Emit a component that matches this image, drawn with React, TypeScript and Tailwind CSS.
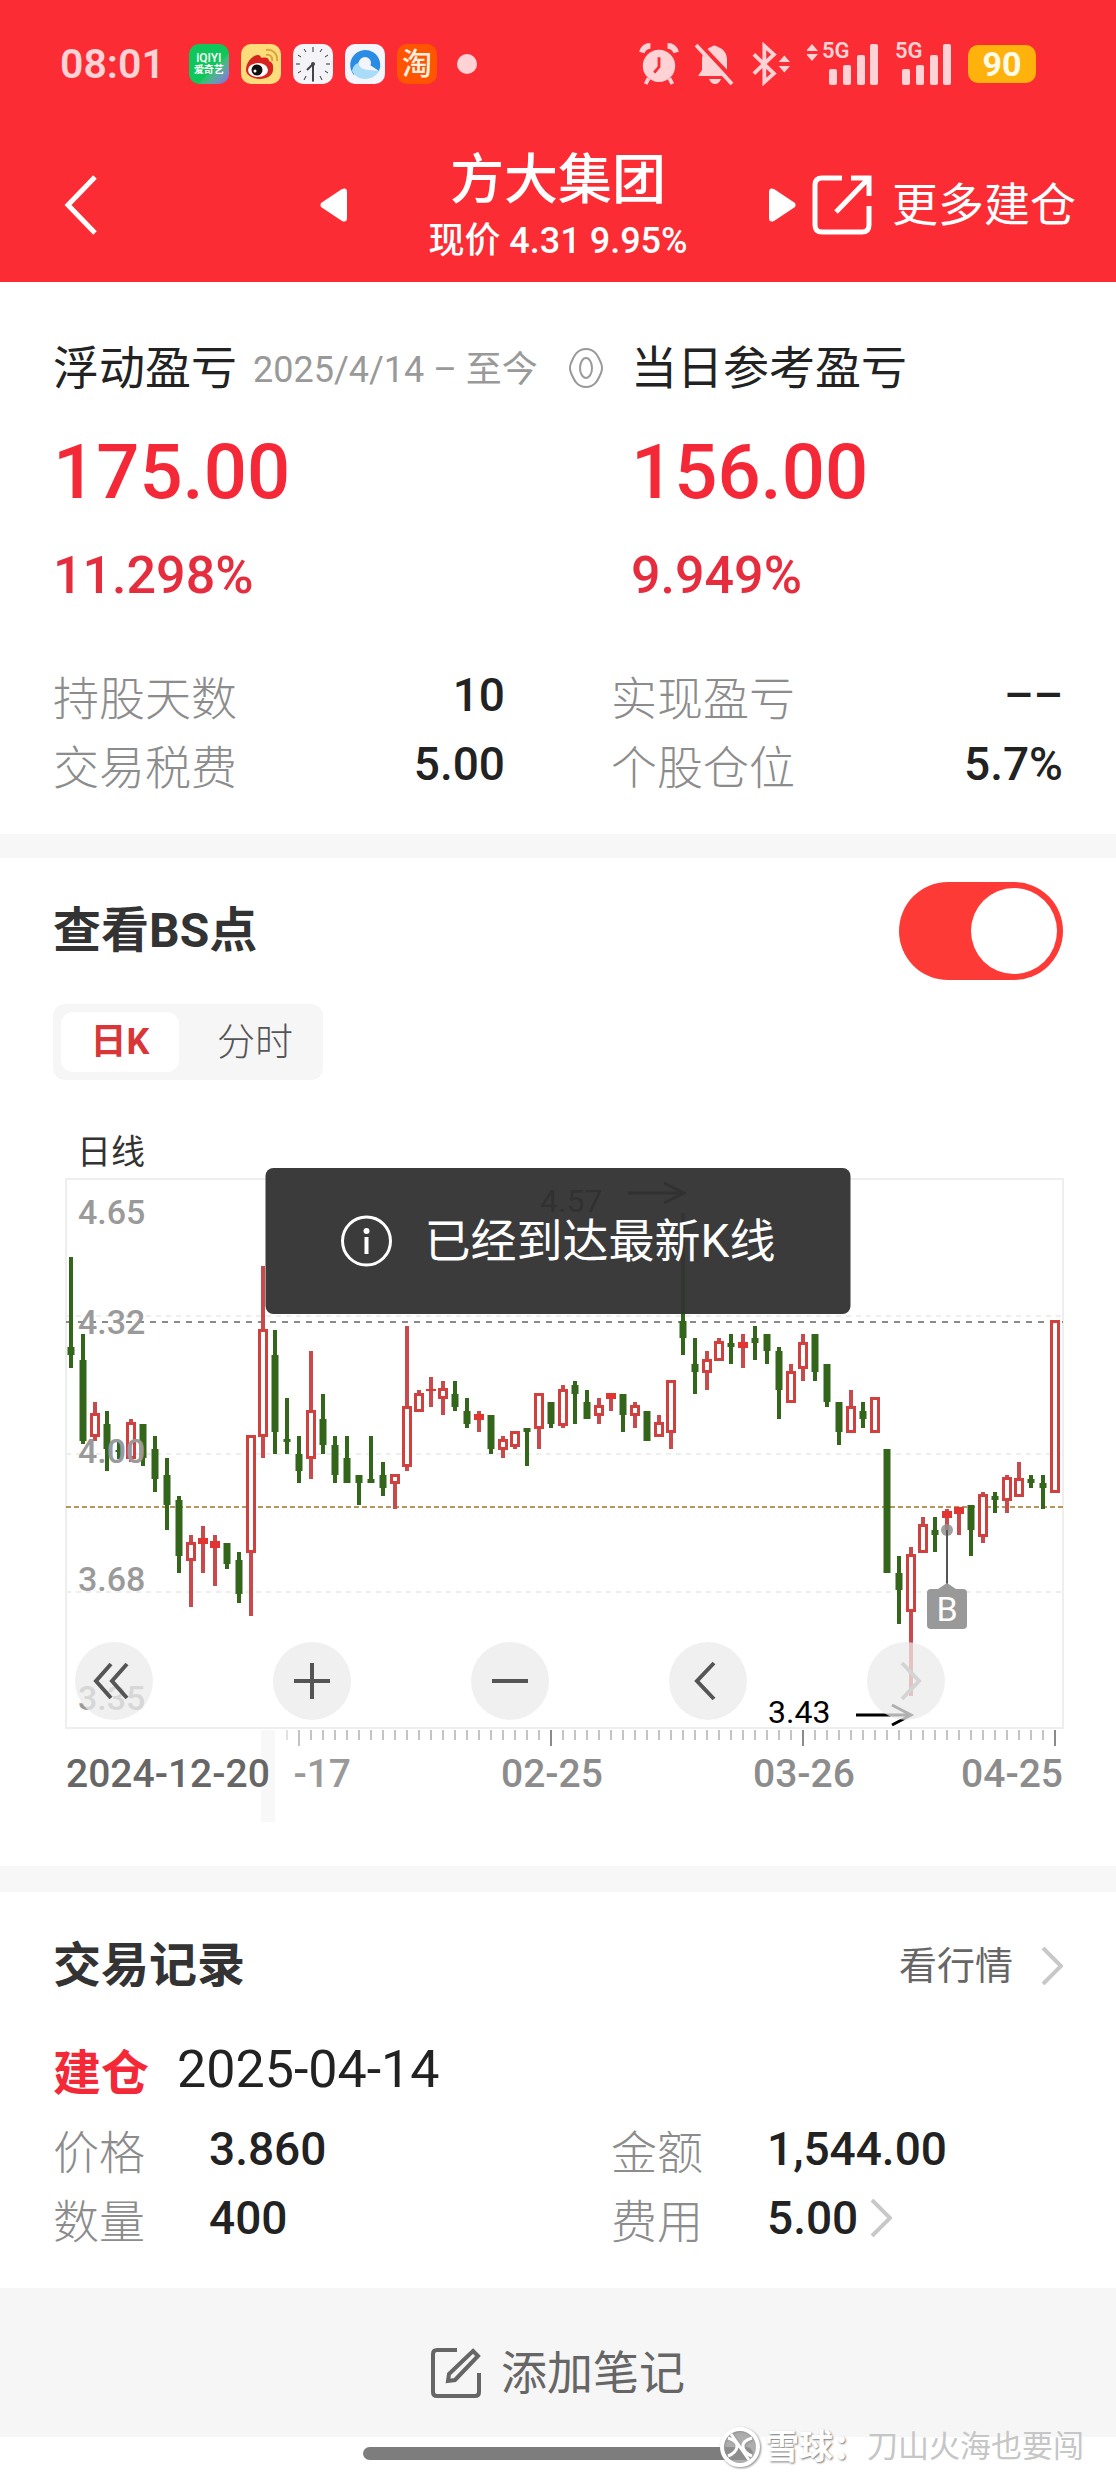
import { useState } from 'react'

type Candle = [kind: 'r' | 'g', high: number, top: number, bottom: number, low: number]

const candles: Candle[] = [
  ['g', 97, 187, 195, 208], ['g', 174, 200, 281, 284], ['r', 242, 253, 277, 281], ['g', 251, 264, 289, 311],
  ['g', 281, 290, 292, 299], ['r', 259, 262, 299, 302], ['g', 264, 264, 298, 306], ['g', 276, 289, 319, 332],
  ['g', 298, 315, 345, 370], ['g', 336, 340, 396, 413], ['r', 375, 382, 401, 447], ['r', 366, 378, 384, 413],
  ['r', 375, 381, 388, 426], ['g', 383, 383, 404, 409], ['g', 392, 400, 434, 443], ['r', 275, 275, 393, 456],
  ['r', 106, 169, 277, 298], ['g', 170, 195, 272, 294], ['g', 238, 279, 282, 294], ['g', 276, 294, 311, 323],
  ['r', 191, 250, 299, 319], ['g', 234, 259, 285, 294], ['g', 276, 285, 315, 323], ['g', 276, 298, 323, 323],
  ['g', 315, 315, 323, 345], ['g', 276, 319, 323, 323], ['g', 302, 315, 328, 336], ['r', 314, 314, 324, 349],
  ['r', 166, 246, 307, 311], ['r', 230, 233, 252, 252], ['r', 217, 229, 231, 247], ['r', 221, 228, 239, 255],
  ['g', 221, 234, 247, 251], ['g', 238, 251, 264, 268], ['r', 251, 254, 260, 272], ['g', 255, 255, 289, 294],
  ['r', 276, 279, 290, 298], ['r', 271, 271, 287, 289], ['g', 268, 268, 272, 306], ['r', 233, 233, 269, 289],
  ['g', 242, 242, 264, 268], ['r', 225, 229, 266, 268], ['g', 221, 225, 234, 264], ['g', 230, 242, 259, 259],
  ['r', 238, 245, 256, 264], ['r', 233, 233, 239, 251], ['g', 234, 234, 255, 272], ['r', 242, 245, 256, 268],
  ['g', 251, 251, 281, 281], ['r', 255, 262, 277, 277], ['r', 220, 220, 273, 289], ['g', 53, 161, 178, 195],
  ['g', 178, 204, 212, 234], ['r', 191, 199, 213, 230], ['r', 178, 181, 201, 201], ['g', 174, 183, 187, 204],
  ['r', 174, 182, 188, 208], ['g', 166, 178, 183, 200], ['g', 174, 174, 191, 204], ['g', 187, 191, 230, 259],
  ['r', 204, 211, 243, 243], ['r', 174, 182, 209, 221], ['g', 174, 174, 212, 221], ['g', 204, 204, 242, 247],
  ['g', 242, 242, 272, 285], ['r', 230, 246, 273, 273], ['g', 242, 251, 259, 268], ['r', 237, 237, 273, 273],
  ['g', 289, 289, 413, 413], ['g', 396, 413, 430, 464], ['r', 387, 394, 452, 536], ['r', 357, 364, 393, 393],
  ['g', 357, 370, 375, 392], ['r', 349, 351, 358, 370], ['r', 347, 347, 354, 375], ['g', 345, 345, 370, 396],
  ['r', 332, 334, 377, 383], ['g', 332, 336, 340, 353], ['r', 315, 317, 341, 353], ['r', 302, 318, 337, 337],
  ['g', 315, 319, 323, 328], ['g', 315, 323, 328, 349], ['r', 160, 160, 333, 333],
]

const candleX = (i: number) => 18 + i * 12

const priceLabels = [
  { text: '4.65', y: 64 },
  { text: '4.32', y: 174 },
  { text: '4.00', y: 303 },
  { text: '3.68', y: 431 },
  { text: '3.35', y: 550 },
]

function CandleBar({ candle, x }: { candle: Candle; x: number }) {
  const [kind, high, top, bottom, low] = candle
  if (kind === 'g') {
    return (
      <g fill="#33661a">
        <rect x={x - 2} y={high} width="4" height={low - high} />
        <rect x={x - 3.5} y={top} width="7" height={bottom - top} />
      </g>
    )
  }
  const hollow = bottom - top > 8
  return (
    <g fill="#c94a4c">
      <rect x={x - 2} y={high} width="4" height={low - high} />
      <rect x={x - 5} y={top} width="10" height={bottom - top} fill={hollow ? '#d0403f' : '#e03530'} />
      {hollow && <rect x={x - 2} y={top + 3} width="4" height={bottom - top - 6} fill="#fff" />}
    </g>
  )
}

function KLineChart() {
  return (
    <svg viewBox="0 16 1010 630" className="block w-full overflow-visible">
      <rect x="13" y="19" width="997" height="549" fill="none" stroke="#eeeeee" strokeWidth="2" />
      <g stroke="#eeeeee" strokeWidth="2" strokeDasharray="5 5">
        <path d="M13 156H1010M13 294H1010M13 432H1010" />
      </g>
      <path d="M13 162H1010" stroke="#8a8a8a" strokeWidth="2" strokeDasharray="6 6" />
      <path d="M13 347H1010" stroke="#b8955a" strokeWidth="2" strokeDasharray="5 3" />

      {candles.map((candle, i) => (
        <CandleBar key={i} candle={candle} x={candleX(i)} />
      ))}

      <g fill="#9a9a9a" fontSize="34" fontWeight="500">
        {priceLabels.map((label) => (
          <text key={label.text} x="25" y={label.y}>{label.text}</text>
        ))}
      </g>

      {/* buy marker */}
      <circle cx="894" cy="370" r="6" fill="#8f8f8f" fillOpacity="0.85" />
      <path d="M894 370V425" stroke="#555" strokeWidth="2" />
      <path d="M894 423l9 6h-18z" fill="#999" />
      <rect x="874" y="429" width="40" height="40" rx="4" fill="#999" />
      <text x="894" y="461" fill="#fff" fontSize="34" textAnchor="middle">B</text>

      {/* highest and lowest price */}
      <g fill="#000" fontSize="32">
        <text x="487" y="52">4.57</text>
        <text x="715" y="563">3.43</text>
      </g>
      <g fill="none" stroke="#000" strokeWidth="3">
        <path d="M575 33H631M611 23l20 10l-20 10" />
        <path d="M803 555H858M839 545l19 10l-19 10" />
      </g>

      <rect x="208" y="570" width="14" height="92" fill="#f8f8f8" />
      {candles.map((_, i) =>
        i < 18 ? null : (
          <path
            key={i}
            d={(82 - i) % 21 === 0 ? `M${candleX(i)} 570v16` : `M${candleX(i)} 570v10`}
            stroke={i < 20 ? '#c4c4c4' : '#8a8a8a'}
            strokeWidth={(82 - i) % 21 === 0 ? 2 : 1}
          />
        ),
      )}

      <g fill="#8c8c8c" fontSize="39" fontWeight="500">
        <text x="13" y="627" fill="#666">2024-12-20</text>
        <text x="298" y="627" fill="#999" textAnchor="end">-17</text>
        <text x="499" y="627" textAnchor="middle">02-25</text>
        <text x="751" y="627" textAnchor="middle">03-26</text>
        <text x="1010" y="627" textAnchor="end">04-25</text>
      </g>
    </svg>
  )
}

const chartButtons = [
  { label: '最早', d: 'M36 22L21 39L36 56M52 22L37 39L52 56' },
  { label: '放大', d: 'M39 21V57M21 39H57' },
  { label: '缩小', d: 'M21 39H57' },
  { label: '向前', d: 'M45 21L28 39L45 57' },
  { label: '向后', d: 'M35 21L52 39L35 57', disabled: true },
]

function Toast({ text }: { text: string }) {
  return (
    <div role="status" className="absolute -top-2 left-1/2 flex h-[146px] w-[585px] -translate-x-1/2 items-center justify-center gap-8 rounded-lg bg-[#333333]/96 text-white">
      <svg width="52" height="52" viewBox="0 0 52 52" fill="none" stroke="currentColor">
        <circle cx="26" cy="26" r="24" strokeWidth="3" />
        <circle cx="26" cy="16" r="3" fill="currentColor" stroke="none" />
        <path d="M26 22V39" strokeWidth="4" />
      </svg>
      <span className="text-[46px] leading-12">{text}</span>
    </div>
  )
}

function Signal({ arrows }: { arrows?: boolean }) {
  return (
    <div className="flex items-start">
      {arrows && (
        <svg width="15" height="20" viewBox="0 0 15 20" fill="currentColor">
          <path d="M5 1l6 7H-1zM5 18l6-7H-1z" />
        </svg>
      )}
      <div className="relative">
        <span className="absolute -top-1 left-0 text-[22px] leading-6 font-semibold">5G</span>
        <svg width="57" height="42" viewBox="0 0 57 42" fill="currentColor">
          <rect x="7" y="26" width="8" height="16" rx="2" />
          <rect x="21" y="22" width="8" height="20" rx="2" />
          <rect x="35" y="12" width="8" height="30" rx="2" />
          <rect x="48" y="1" width="8" height="41" rx="2" />
        </svg>
      </div>
    </div>
  )
}

function StatusBar() {
  return (
    <div className="flex h-32 items-center justify-between pr-20 pl-15 text-[#ffd3d5]">
      <div className="flex items-center gap-3">
        <span className="mr-3 text-[41px] leading-12 font-semibold">08:01</span>
        <div className="flex size-10 flex-col items-center justify-center rounded-[10px] bg-linear-to-br from-[#0fc65c] from-60% to-[#8a5cf0] text-white">
          <span className="text-[12px] leading-3 font-medium">iQIYI</span>
          <span className="text-[10px] leading-3 font-bold">爱奇艺</span>
        </div>
        <svg width="40" height="40" viewBox="0 0 40 40">
          <rect width="40" height="40" rx="10" fill="#fddc7c" />
          <path d="M5 26C5 18 12 11 17 11c3 0 3 3 3 3s8-2 8 3c5 2 4 6 4 9c0 5-6 9-13 9S5 31 5 26z" fill="#d8231f" />
          <ellipse cx="17" cy="26" rx="10" ry="7" fill="#fff" />
          <circle cx="16" cy="26" r="5.500" fill="#111" />
          <circle cx="14" cy="27" r="1.500" fill="#fff" />
          <path d="M25 11c4-1 7 2 6 6M25 6c7-1 12 4 11 11" fill="none" stroke="#dba53c" strokeWidth="2" />
        </svg>
        <svg width="40" height="40" viewBox="0 0 40 40">
          <rect width="40" height="40" rx="10" fill="#f4f4f8" />
          <g stroke="#333" strokeWidth="1">
            <path d="M20 3v5M20 35v3M3 20h4M33 20h4M11 5l2 3M29 5l-2 3M5 11l3 2M35 11l-3 2M5 29l3-2M35 29l-3-2M11 36l2-4M29 36l-2-4" />
          </g>
          <path d="M20 20V37M20 20L14 26" stroke="#444" strokeWidth="2" />
          <circle cx="20" cy="20" r="2" fill="#444" />
        </svg>
        <svg width="40" height="40" viewBox="0 0 40 40">
          <rect width="40" height="40" rx="10" fill="#f4f5fb" />
          <path d="M9 31A15 15 0 1 1 34 27L25 21A6 6 0 1 0 14 24Z" fill="#2b8ce6" />
          <path d="M7 27c1-5 4-8 7-8c0 4 4 7 10 7c4 0 8 1 10 1c-4 9-21 12-27 0z" fill="#a8dcf8" />
          <circle cx="20" cy="19" r="6" fill="#f4f5fb" />
        </svg>
        <div className="flex size-10 items-center justify-center rounded-[10px] bg-[#ff5500] text-[30px] leading-10 font-medium text-[#fff0e0]">淘</div>
        <span className="ml-2 size-5 rounded-full bg-[#ffd3d5]" />
      </div>

      <div className="flex items-center gap-4">
        <svg width="40" height="44" viewBox="0 0 42 44" fill="none" stroke="currentColor">
          <circle cx="21" cy="24" r="17" fill="currentColor" stroke="none" />
          <path d="M3 10Q5 3 12 3M39 10Q37 3 30 3" strokeWidth="6" />
          <path d="M10 37l-3 6M32 37l3 6" strokeWidth="4" />
          <path d="M21 15v10l-5 6" stroke="#fb2c33" strokeWidth="3" />
        </svg>
        <svg width="40" height="44" viewBox="0 0 40 44" fill="currentColor">
          <path d="M3 34l4-6V18c0-7 4-11 9-13q3-3 7 0c6 2 9 7 9 13v10l4 6zM14 37h12q-2 5-6 5t-6-5z" />
          <path d="M4 1L40 39" stroke="#fb2c33" strokeWidth="4" />
          <path d="M1 3L37 42" stroke="currentColor" strokeWidth="4" />
        </svg>
        <svg width="40" height="44" viewBox="0 0 42 44" fill="none" stroke="currentColor" strokeWidth="4">
          <path d="M3 12L24 32L14 41V3L24 12L3 32" />
          <path d="M35 13l6 7H29zM35 31l6-7H29z" fill="currentColor" stroke="none" />
        </svg>
        <Signal arrows />
        <Signal />
        <div className="flex h-[38px] w-[68px] items-center justify-center rounded-[10px] bg-[#ffb20c] text-[34px] leading-9 font-bold text-[#fffbe8]">90</div>
      </div>
    </div>
  )
}

function NavBar() {
  return (
    <div className="grid h-[154px] grid-cols-[1fr_476px_1fr] items-center">
      <button type="button" aria-label="返回" className="w-24 pl-16">
        <svg width="34" height="60" viewBox="0 0 34 60" fill="none" stroke="currentColor" strokeWidth="5">
          <path d="M31 2L4 30L31 58" />
        </svg>
      </button>
      <div className="flex items-center justify-between">
        <button type="button" aria-label="上一只">
          <svg width="27" height="34" viewBox="0 0 27 34" fill="currentColor">
            <path d="M1 15Q0 17 1 19L22 33Q27 35 27 30V4Q27-1 22 1z" />
          </svg>
        </button>
        <div className="pt-2 text-center">
          <h1 className="text-[54px] leading-16 font-medium">方大集团</h1>
          <p className="text-[36px] leading-14 font-medium">现价 4.31 9.95%</p>
        </div>
        <button type="button" aria-label="下一只">
          <svg width="27" height="34" viewBox="0 0 27 34" fill="currentColor">
            <path d="M26 15Q27 17 26 19L5 33Q0 35 0 30V4Q0-1 5 1z" />
          </svg>
        </button>
      </div>
      <a href="#" className="flex items-center gap-5 pl-4 whitespace-nowrap">
        <svg width="60" height="60" viewBox="0 0 60 60" fill="none" stroke="currentColor" strokeWidth="5" className="shrink-0">
          <path d="M30 3H10Q3 3 3 10V50Q3 57 10 57H50Q57 57 57 50V31" />
          <path d="M39 3H57V21M57 3L24 37" />
        </svg>
        <span className="text-[46px] leading-16">更多建仓</span>
      </a>
    </div>
  )
}

function Stat({ label, value }: { label: string; value: string }) {
  return (
    <div className="flex h-[69px] items-center justify-between">
      <dt className="pt-2 text-[46px] leading-14 font-light text-[#8c8c8c]">{label}</dt>
      <dd className="text-[46px] leading-14 font-medium text-[#222222]">{value}</dd>
    </div>
  )
}

function RecordItem({ label, value, more }: { label: string; value: string; more?: boolean }) {
  return (
    <div className="flex h-[69px] items-center">
      <dt className="w-[156px] pt-2 text-[46px] leading-14 font-light text-[#8c8c8c]">{label}</dt>
      <dd className="flex items-center gap-3 text-[46px] leading-14 font-medium text-[#222222]">
        {value}
        {more && <Chevron />}
      </dd>
    </div>
  )
}

function Chevron() {
  return (
    <svg width="22" height="38" viewBox="0 0 22 38" fill="none" stroke="#c8c8c8" strokeWidth="4">
      <path d="M2 1L20 19L2 37" />
    </svg>
  )
}

export default function App() {
  const [showPoints, setShowPoints] = useState(true)

  return (
    <div className="relative bg-white font-[Roboto,'Noto_Sans_CJK_SC',sans-serif] text-[#222222]">
      <header className="bg-[#fb2c33] text-white">
        <StatusBar />
        <NavBar />
      </header>

      <section className="px-[53px] pt-[54px] pb-9">
        <div className="grid grid-cols-[578fr_432fr]">
          <div>
            <div className="flex h-16 items-center whitespace-nowrap">
              <h2 className="text-[46px] leading-16">浮动盈亏</h2>
              <span className="pt-1 pl-4 text-[36px] leading-14 text-[#999999]">2025/4/14 – 至今</span>
              <svg width="34" height="40" viewBox="0 0 34 40" fill="none" stroke="#999" strokeWidth="2" className="mr-7 ml-auto">
                <path d="M17 1C26 1 29 8 32 15Q34 20 32 25C29 32 26 39 17 39S5 32 2 25Q0 20 2 15C5 8 8 1 17 1z" />
                <ellipse cx="17" cy="20" rx="6" ry="10" />
              </svg>
            </div>
            <p className="mt-6 text-[76px] leading-24 font-medium text-[#f42837]">175.00</p>
            <p className="mt-6 text-[52px] leading-16 font-medium text-[#e62d3e]">11.298%</p>
          </div>
          <div>
            <h2 className="text-[46px] leading-16 whitespace-nowrap">当日参考盈亏</h2>
            <p className="mt-6 text-[76px] leading-24 font-medium text-[#f42837]">156.00</p>
            <p className="mt-6 text-[52px] leading-16 font-medium text-[#e62d3e]">9.949%</p>
          </div>
        </div>
        <dl className="mt-13 grid grid-cols-2 gap-x-[106px]">
          <Stat label="持股天数" value="10" />
          <Stat label="实现盈亏" value="––" />
          <Stat label="交易税费" value="5.00" />
          <Stat label="个股仓位" value="5.7%" />
        </dl>
      </section>

      <div className="h-6 bg-[#f7f7f7]" />

      <section className="px-[53px] pt-6 pb-[60px]">
        <div className="flex items-center justify-between">
          <label htmlFor="bs-switch" className="text-[48px] leading-16 font-bold text-[#333333]">查看BS点</label>
          <input
            id="bs-switch"
            type="checkbox"
            role="switch"
            checked={showPoints}
            onChange={(e) => setShowPoints(e.target.checked)}
            className="relative h-[98px] w-[164px] appearance-none rounded-full bg-[#dddddd] after:absolute after:top-[6px] after:left-[6px] after:size-[86px] after:rounded-full after:bg-white checked:bg-[#fe3a36] checked:after:left-[72px]"
          />
        </div>

        <div className="mt-6 flex h-[76px] w-[270px] rounded-xl bg-[#f6f6f6] p-2">
          <button type="button" className="w-[118px] rounded-xl bg-white text-[36px] font-bold text-[#d93638]">日K</button>
          <button type="button" className="flex-1 pl-4 text-[38px] font-light text-[#555555]">分时</button>
        </div>

        <p className="mt-12 pl-6 text-[34px] leading-12 text-[#333333]">日线</p>
        <div className="relative">
          <KLineChart />
          <div className="absolute top-[466px] left-[22px] flex gap-[120px]">
            {chartButtons.map((b) => (
              <button
                key={b.label}
                type="button"
                aria-label={b.label}
                disabled={b.disabled}
                className="size-[78px] rounded-full bg-[#ebebeb]/75 text-[#555555] disabled:text-[#d4d4d4]"
              >
                <svg width="78" height="78" viewBox="0 0 78 78" fill="none" stroke="currentColor" strokeWidth="4">
                  <path d={b.d} />
                </svg>
              </button>
            ))}
          </div>
          <Toast text="已经到达最新K线" />
        </div>
      </section>

      <div className="h-[26px] bg-[#f7f7f7]" />

      <section className="px-[53px] pt-[42px] pb-9">
        <div className="flex items-center justify-between">
          <h2 className="text-[48px] leading-16 font-bold text-[#333333]">交易记录</h2>
          <a href="#" className="flex items-center gap-7 text-[38px] leading-16 text-[#666666]">
            看行情
            <Chevron />
          </a>
        </div>
        <div className="mt-10 flex items-center gap-7 leading-16">
          <span className="text-[48px] font-bold text-[#f42837]">建仓</span>
          <span className="pb-2 text-[52px]">2025-04-14</span>
        </div>
        <dl className="mt-1 grid grid-cols-2 gap-x-[106px]">
          <RecordItem label="价格" value="3.860" />
          <RecordItem label="金额" value="1,544.00" />
          <RecordItem label="数量" value="400" />
          <RecordItem label="费用" value="5.00" more />
        </dl>
      </section>

      <button type="button" className="flex h-[149px] w-full items-center justify-center gap-5 bg-[#f6f6f6] pt-5 text-[46px] leading-16 text-[#666666]">
        <svg width="50" height="50" viewBox="0 0 50 50" fill="none" stroke="currentColor" strokeWidth="4">
          <path d="M26 2H6Q2 2 2 6V44Q2 48 6 48H44Q48 48 48 44V25" />
          <path d="M42 3L47 8L24 32L17 33L18 26z" />
        </svg>
        添加笔记
      </button>

      <div className="h-[46px] pt-[10px]">
        <div className="mx-auto h-[13px] w-[390px] rounded-full bg-[#7d7d7d]" />
      </div>

      <div className="absolute right-8 bottom-3 flex items-center text-[31px] leading-12 whitespace-nowrap text-[#c6c6c6]">
        <svg width="42" height="42" viewBox="0 0 42 42" fill="none" stroke="#fff" strokeWidth="4" className="mr-1 drop-shadow-[1px_1px_1px_#888]">
          <circle cx="21" cy="21" r="18" fill="#999" fillOpacity="0.5" />
          <path d="M9 12Q19 15 18 21T9 30M33 12Q23 15 24 21T33 30M12 8L30 34" strokeWidth="3" />
        </svg>
        <span className="text-[34px] font-bold text-white [text-shadow:1px_1px_2px_#777]">雪球：</span>
        <span>刀山火海也要闯</span>
      </div>
    </div>
  )
}
